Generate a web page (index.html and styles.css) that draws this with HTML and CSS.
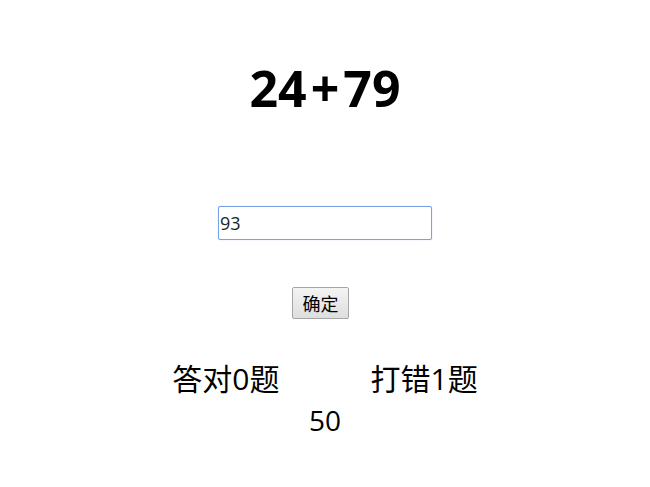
FILE: index.html
```html
<!DOCTYPE html>
<html lang="zh">
<head>
<meta charset="utf-8">
<link rel="stylesheet" href="styles.css">
</head>
<body>
<div class="page">
  <h1 class="question">24<span class="op">+</span>79</h1>
  <div class="input-row"><input class="answer" type="text" value="93"></div>
  <div class="button-row"><button class="submit">确定</button></div>
  <div class="stats">
    <span class="stat">答对0题</span>
    <span class="stat">打错1题</span>
  </div>
  <div class="score">50</div>
</div>
</body>
</html>
```
FILE: styles.css
```css
html, body {
  margin: 0;
  padding: 0;
  background: #fff;
}
body {
  font-family: "Open Sans", "Noto Sans CJK SC", sans-serif;
  color: #000;
}
.page {
  display: flex;
  flex-direction: column;
  align-items: center;
  padding-top: 56px;
}
.question {
  margin: 0;
  font-size: 50px;
  font-weight: bold;
  line-height: 64px;
  letter-spacing: 0;
}
.op {
  margin: 0 4px 0 4px;
}
.input-row {
  margin-top: 86px;
}
.answer {
  box-sizing: border-box;
  width: 214px;
  height: 34px;
  border: 1px solid #7aa1e8;
  border-radius: 2px;
  padding: 0 1px;
  font-family: "Open Sans", "Noto Sans CJK SC", sans-serif;
  font-size: 18px;
  color: #222;
  outline: none;
  box-shadow: 0 0 1px #9ab8f0;
}
.button-row {
  margin-top: 47px;
  margin-right: 9px;
}
.submit {
  box-sizing: border-box;
  width: 57px;
  height: 32px;
  padding: 0;
  border: 1px solid #a6a6a6;
  border-radius: 2px;
  background: linear-gradient(#f4f4f4, #dedede);
  font-family: "Noto Sans CJK SC", sans-serif;
  font-size: 18px;
  color: #000;
}
.stats {
  margin-top: 39px;
  display: flex;
  gap: 91px;
  font-family: "Open Sans", "Noto Sans CJK SC", sans-serif;
  font-size: 30px;
  line-height: 42px;
}
.score {
  font-size: 28px;
  line-height: 40px;
}
```
